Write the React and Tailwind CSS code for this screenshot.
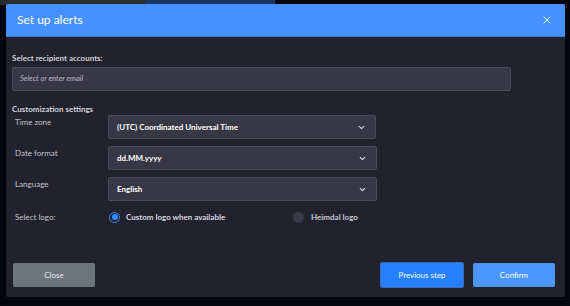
import React from 'react';
import { X, ChevronDown } from 'lucide-react';

const font = { fontFamily: 'Lato, "Open Sans", "Liberation Sans", sans-serif' };

function SelectRow({ label, value, width }) {
  return (
    <div className="flex items-start h-[31px]">
      <span className="w-[96px] pl-[3px] pt-[1px] text-[8px] text-[#c3c3cc]">{label}</span>
      <div className={`${width} h-[24px] flex items-center justify-between pl-[8px] pr-[9px] bg-[#383746] border border-[#4b4a5a] rounded-[2px]`}>
        <span className="text-[8px] font-bold text-white">{value}</span>
        <ChevronDown size={9} strokeWidth={3} className="text-[#d8d8e0]" />
      </div>
    </div>
  );
}

export default function App() {
  return (
    <div className="w-[570px] h-[306px] bg-[#05050e] overflow-hidden relative" style={font}>
      {/* page behind the modal */}
      <div className="absolute top-0 left-0 flex h-[5px] w-full">
        <div className="w-[145px] bg-[#2a2a33]" />
        <div className="w-[130px] bg-[#1c3663]" />
      </div>

      <div className="relative ml-[6px] mt-[4px] w-[559px] h-[293px] bg-[#22212e] rounded-[2px] flex flex-col">
        <div className="h-[33px] bg-[#4691ff] rounded-t-[2px] flex items-center justify-between pl-[11px] pr-[12px] border-b border-[#3c7ad4]">
          <span className="text-[12px] text-white">Set up alerts</span>
          <X size={12} strokeWidth={2} className="text-white" />
        </div>

        <div className="flex-1 flex flex-col px-[6px] pt-[15px]">
          <div className="text-[8px] font-bold text-[#d0d0d8] h-[12px]">Select recipient accounts:</div>
          <div className="mt-[3px] w-[499px] h-[24px] flex items-center px-[7px] bg-[#383746] border border-[#4b4a5a] rounded-[2px]">
            <span className="text-[7.5px] italic text-[#b8b8c4]">Select or enter email</span>
          </div>

          <div className="mt-[12px] text-[8px] font-bold text-[#d0d0d8] h-[11px]">Customization settings</div>

          <div className="mt-[1px] flex flex-col">
            <SelectRow label="Time zone" value="(UTC) Coordinated Universal Time" width="w-[268px]" />
            <SelectRow label="Date format" value="dd.MM.yyyy" width="w-[269px]" />
            <SelectRow label="Language" value="English" width="w-[269px]" />
          </div>

          <div className="mt-[2px] flex items-center h-[14px]">
            <span className="w-[97px] pl-[3px] text-[8px] text-[#c3c3cc]">Select logo:</span>
            <div className="flex items-center w-[184px]">
              <span className="w-[11px] h-[11px] rounded-full border-[1.5px] border-[#2f8cff] flex items-center justify-center">
                <span className="w-[6px] h-[6px] rounded-full bg-[#2f8cff]" />
              </span>
              <span className="ml-[6px] text-[8px] font-bold text-[#d8d8e0]">Custom logo when available</span>
            </div>
            <div className="flex items-center">
              <span className="w-[11px] h-[11px] rounded-full bg-[#3a3948]" />
              <span className="ml-[7px] text-[8px] font-bold text-[#c8c8d4]">Heimdal logo</span>
            </div>
          </div>

          <div className="mt-auto mb-[9px] flex items-center justify-between pl-[1px] pr-[4px]">
            <button className="w-[82px] h-[24px] bg-[#6c757e] rounded-[2px] text-[8px] text-[#e4e6ea]">Close</button>
            <div className="flex items-center gap-[9px]">
              <button className="w-[84px] h-[26px] bg-[#2680ff] border border-[#3a6bb8] rounded-[2px] text-[8px] text-white">Previous step</button>
              <button className="w-[82px] h-[24px] bg-[#4c96ff] rounded-[2px] text-[8px] text-white">Confirm</button>
            </div>
          </div>
        </div>
      </div>
    </div>
  );
}
